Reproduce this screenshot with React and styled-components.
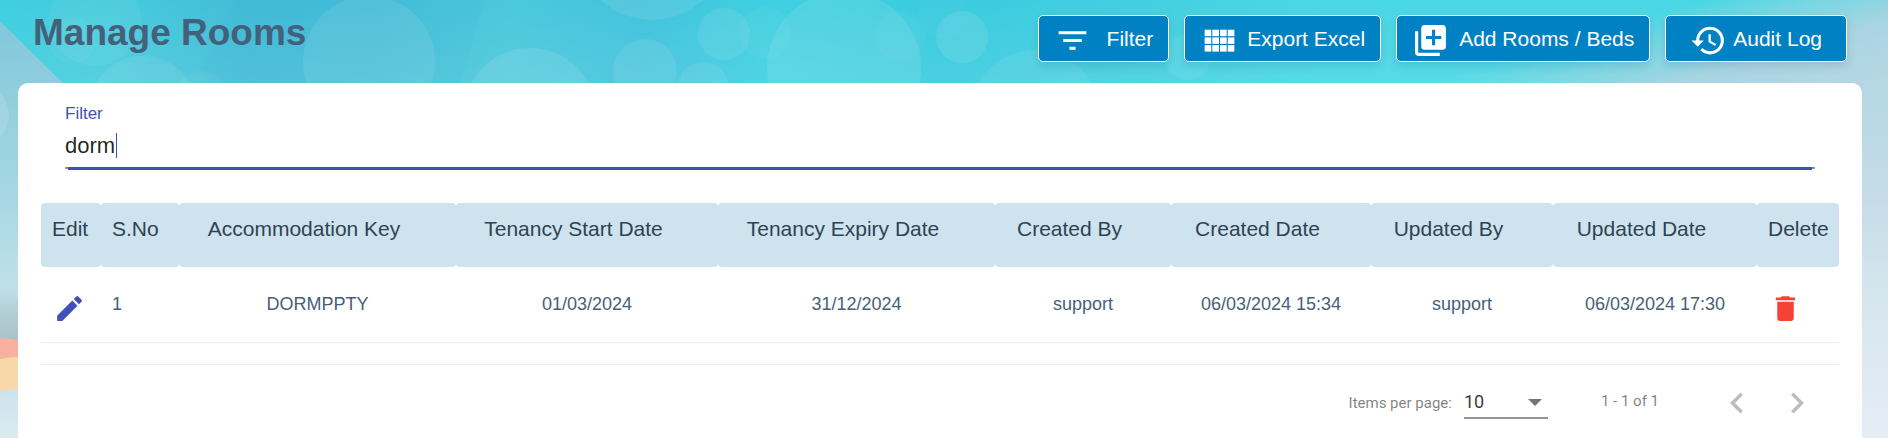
import React, { useState } from "react";
import styled, { createGlobalStyle } from "styled-components";
import {
	MdChevronLeft,
	MdChevronRight,
	MdDelete,
	MdEdit,
	MdFilterList,
	MdHistory,
	MdLibraryAdd
} from "react-icons/md";

const GlobalStyle = createGlobalStyle`
	* {
		box-sizing: border-box;
	}
	body {
		margin: 0;
		font-family: "Liberation Sans", Arial, sans-serif;
		color: #456179;
	}
`;

const Page = styled.div`
	position: relative;
	display: flex;
	flex-flow: column nowrap;
	min-height: 100vh;
	padding: 0 26px 0 18px;
`;

const Backdrop = styled.svg`
	position: absolute;
	inset: 0;
	z-index: -1;
	width: 100%;
	height: 100%;
`;

const Header = styled.header`
	display: flex;
	flex-flow: row wrap;
	justify-content: space-between;
	align-items: flex-start;
	padding: 15px 15px 21px;
`;

const Title = styled.h1`
	margin: 0;
	padding-bottom: 8px;
	font-size: 37px;
	line-height: 36px;
	color: #44607a;
`;

const Toolbar = styled.div`
	display: flex;
	flex-flow: row wrap;
	gap: 15px;
`;

const ToolButton = styled.button`
	display: flex;
	align-items: center;
	justify-content: center;
	gap: ${props => props.$gap || 10}px;
	height: 47px;
	padding: 0 ${props => props.$pad || 15}px;
	border: 1px solid #fff;
	border-radius: 5px;
	background: #0081c4;
	box-shadow: 0 4px 8px rgba(0, 60, 90, 0.14);
	color: #fff;
	font-family: inherit;
	font-size: 21px;
	line-height: 24px;
	white-space: nowrap;
	cursor: pointer;
	svg {
		width: 37px;
		height: 37px;
		margin-top: 4px;
	}
`;

const Panel = styled.main`
	flex: 1;
	padding: 21px 23px 0;
	border-radius: 10px 10px 0 0;
	background: #fff;
`;

const Field = styled.div`
	display: flex;
	flex-flow: column nowrap;
	margin: 0 24px 33px;
	label {
		margin-bottom: 9px;
		font-size: 17px;
		line-height: 20px;
		color: #3f51b5;
	}
`;

const InputLine = styled.div`
	position: relative;
	padding-bottom: 8px;
`;

const FilterInput = styled.input`
	display: block;
	width: 100%;
	height: 26px;
	padding: 0;
	border: 0;
	outline: 0;
	background: transparent;
	color: rgba(0, 0, 0, 0.87);
	caret-color: transparent;
	font-family: inherit;
	font-size: 22px;
	line-height: 26px;
`;

const Caret = styled.span`
	position: absolute;
	top: 0;
	left: 0;
	height: 25px;
	padding-right: 1px;
	border-right: 1px solid #3f51b5;
	color: transparent;
	font-size: 22px;
	line-height: 25px;
	white-space: pre;
	pointer-events: none;
	&::before {
		content: "${props => props.$text}";
	}
`;

const Underline = styled.div`
	height: 3px;
	padding: 0 3px;
	background: linear-gradient(#949494 2px, transparent 2px);
	&::after {
		content: "";
		display: block;
		height: 3px;
		background: #3f51b5;
	}
`;

const RoomTable = styled.table`
	width: 100%;
	table-layout: fixed;
	border-collapse: separate;
	border-spacing: 0;
`;

const HeadCell = styled.th`
	height: 64px;
	padding: 14px ${props => (props.$sortable ? 27 : 0)}px 0 ${props => (props.$sortable ? 0 : 11)}px;
	border-radius: 4px;
	background: #cfe3ee;
	color: #2d4454;
	font-size: 21px;
	font-weight: 400;
	line-height: 24px;
	text-align: ${props => (props.$sortable ? "center" : "left")};
	vertical-align: top;
	white-space: nowrap;
`;

const Cell = styled.td`
	height: 76px;
	padding: ${props => (props.$icon ? "25px 0 0 12px" : "27px 0 0")};
	padding-left: ${props => props.$left && "11px"};
	border-bottom: 1px solid #ececec;
	font-size: 18px;
	line-height: 20px;
	text-align: ${props => (props.$left || props.$icon ? "left" : "center")};
	vertical-align: top;
	white-space: nowrap;
`;

const IconButton = styled.button`
	display: flex;
	align-items: center;
	justify-content: center;
	width: ${props => props.$size}px;
	height: ${props => props.$size}px;
	padding: 0;
	border: 0;
	background: none;
	color: ${props => props.color};
	cursor: pointer;
`;

const Paginator = styled.div`
	display: flex;
	align-items: center;
	justify-content: flex-end;
	margin-top: 21px;
	padding: 8px 12px 0 0;
	border-top: 1px solid #ececec;
	color: rgba(0, 0, 0, 0.5);
	font-family: Roboto, sans-serif;
	font-size: 15px;
	line-height: 20px;
`;

const PageSize = styled.div`
	position: relative;
	margin-left: 12px;
	svg {
		position: absolute;
		top: 12px;
		right: 6px;
		pointer-events: none;
	}
	select {
		display: block;
		width: 84px;
		height: 32px;
		padding: 0 0 2px;
		border: 0;
		border-bottom: 2px solid #949494;
		outline: 0;
		appearance: none;
		background: transparent;
		color: rgba(0, 0, 0, 0.8);
		font-family: inherit;
		font-size: 18px;
	}
`;

const Range = styled.span`
	margin: 0 48px 0 53px;
	padding-bottom: 4px;
`;

const columns = [
	{ name: "Edit", width: 60 },
	{ name: "S.No", width: 78 },
	{ name: "Accommodation Key", width: 277, sortable: true },
	{ name: "Tenancy Start Date", width: 262, sortable: true },
	{ name: "Tenancy Expiry Date", width: 277, sortable: true },
	{ name: "Created By", width: 176, sortable: true },
	{ name: "Created Date", width: 200, sortable: true },
	{ name: "Updated By", width: 182, sortable: true },
	{ name: "Updated Date", width: 204, sortable: true },
	{ name: "Delete", width: 82 }
];

const rooms = [
	{
		key: "DORMPPTY",
		start: "01/03/2024",
		expiry: "31/12/2024",
		createdBy: "support",
		createdDate: "06/03/2024 15:34",
		updatedBy: "support",
		updatedDate: "06/03/2024 17:30"
	}
];

// cx, cy, r, opacity
const bubbles = [
	[95, 20, 46, 0.06],
	[72, 40, 24, 0.05],
	[143, 110, 54, 0.1],
	[200, 96, 25, 0.06],
	[369, 62, 66, 0.1],
	[530, 115, 67, 0.12],
	[652, -55, 75, 0.11],
	[724, 34, 26, 0.1],
	[645, 71, 32, 0.1],
	[703, 88, 26, 0.1],
	[765, 33, 26, 0.05],
	[844, 68, 77, 0.12],
	[900, 36, 25, 0.05],
	[943, 14, 25, 0.03],
	[962, 37, 26, 0.12],
	[1035, 115, 65, 0.08],
	[1188, 57, 23, 0.07]
];

const Background = () => (
	<Backdrop viewBox="0 0 1888 438" preserveAspectRatio="none" aria-hidden="true">
		<defs>
			<linearGradient id="sea">
				<stop offset="0" stopColor="#3dcfe0" />
				<stop offset="0.06" stopColor="#47cbdd" />
				<stop offset="0.13" stopColor="#41bcd7" />
				<stop offset="0.2" stopColor="#43bed8" />
				<stop offset="0.27" stopColor="#4ac8dc" />
				<stop offset="0.34" stopColor="#42c3dd" />
				<stop offset="0.41" stopColor="#3fd0e1" />
				<stop offset="0.5" stopColor="#39cbdf" />
				<stop offset="0.6" stopColor="#43cfe0" />
				<stop offset="0.7" stopColor="#49d7e5" />
				<stop offset="1" stopColor="#49d7e5" />
			</linearGradient>
			<linearGradient id="shore" gradientUnits="userSpaceOnUse" x1="1640" y1="19" x2="1679" y2="147">
				<stop offset="0" stopColor="#8fd6e1" stopOpacity="0" />
				<stop offset="0.25" stopColor="#92d6e1" stopOpacity="0.65" />
				<stop offset="0.55" stopColor="#a9d4e2" />
				<stop offset="1" stopColor="#b7d7e4" />
			</linearGradient>
			<linearGradient id="leftSky" x2="0" y2="1">
				<stop offset="0" stopColor="#80c8da" />
				<stop offset="0.2" stopColor="#8fcddd" />
				<stop offset="0.5" stopColor="#a3d6e2" />
				<stop offset="0.82" stopColor="#bfe0e9" />
				<stop offset="0.91" stopColor="#b1ccd3" />
				<stop offset="1" stopColor="#aac0c8" />
			</linearGradient>
			<linearGradient id="rightSky" x2="0" y2="1">
				<stop offset="0" stopColor="#b5d7e4" />
				<stop offset="0.3" stopColor="#c5dce7" />
				<stop offset="0.6" stopColor="#d6e6ee" />
				<stop offset="1" stopColor="#e5edf5" />
			</linearGradient>
			<linearGradient id="water" x2="0" y2="1">
				<stop offset="0" stopColor="#cce3ec" />
				<stop offset="1" stopColor="#dceaf1" />
			</linearGradient>
			<linearGradient id="lift" x2="0" y2="1">
				<stop offset="0" stopColor="#fff" stopOpacity="0" />
				<stop offset="1" stopColor="#fff" stopOpacity="0.1" />
			</linearGradient>
		</defs>
		<rect width="1888" height="100" fill="url(#sea)" />
		<path d="M235 0h250l-30 100H235l-35-30z" fill="#38b4d4" opacity="0.1" />
		{bubbles.map(([cx, cy, r, opacity]) => (
			<circle key={`${cx}-${cy}`} cx={cx} cy={cy} r={r} fill="#e0eef0" opacity={opacity} />
		))}
		<rect width="1888" height="100" fill="url(#lift)" />
		<rect x="1300" width="588" height="100" fill="url(#shore)" />
		<path d="M0 21L80 100V345H0z" fill="url(#leftSky)" />
		<circle cx="-22" cy="115" r="31" fill="#fff" opacity="0.12" />
		<path d="M0 338q10 0 20 3v30H0z" fill="#f8b0a1" />
		<path d="M0 359q8-2 20-2v36H0z" fill="#f6d8a9" />
		<path d="M0 391q10-2 20-2v49H0z" fill="url(#water)" />
		<path d="M1850 90h38v348h-38z" fill="url(#rightSky)" />
	</Backdrop>
);

const GridIcon = () => (
	<svg viewBox="0 0 24 24" fill="currentColor" aria-hidden="true">
		{[5, 10, 15].map(y =>
			[3, 8, 13, 18].map(x => <rect key={`${x}-${y}`} x={x} y={y} width="4.3" height="4.2" />)
		)}
	</svg>
);

const RoomRow = props => {
	const { room, number } = props;
	return (
		<tr>
			<Cell $icon>
				<IconButton $size={33} color="#3f51b5" aria-label="Edit room">
					<MdEdit size={33} />
				</IconButton>
			</Cell>
			<Cell $left>{number}</Cell>
			<Cell>{room.key}</Cell>
			<Cell>{room.start}</Cell>
			<Cell>{room.expiry}</Cell>
			<Cell>{room.createdBy}</Cell>
			<Cell>{room.createdDate}</Cell>
			<Cell>{room.updatedBy}</Cell>
			<Cell>{room.updatedDate}</Cell>
			<Cell $icon>
				<IconButton $size={33} color="#f44336" aria-label="Delete room">
					<MdDelete size={33} />
				</IconButton>
			</Cell>
		</tr>
	);
};

const App = () => {
	const [filter, setFilter] = useState("dorm");
	const visible = rooms.filter(room => room.key.toLowerCase().includes(filter.toLowerCase()));

	return (
		<Page>
			<GlobalStyle />
			<Background />
			<Header>
				<Title>Manage Rooms</Title>
				<Toolbar>
					<ToolButton $gap={16}>
						<MdFilterList />
						Filter
					</ToolButton>
					<ToolButton>
						<GridIcon />
						Export Excel
					</ToolButton>
					<ToolButton>
						<MdLibraryAdd />
						Add Rooms / Beds
					</ToolButton>
					<ToolButton $gap={6} $pad={24}>
						<MdHistory />
						Audit Log
					</ToolButton>
				</Toolbar>
			</Header>
			<Panel>
				<Field>
					<label htmlFor="filter">Filter</label>
					<InputLine>
						<FilterInput
							id="filter"
							value={filter}
							autoComplete="off"
							onChange={e => setFilter(e.target.value)}
						/>
						<Caret $text={filter} />
					</InputLine>
					<Underline />
				</Field>
				<RoomTable>
					<colgroup>
						{columns.map(col => (
							<col key={col.name} width={col.width} />
						))}
					</colgroup>
					<thead>
						<tr>
							{columns.map(col => (
								<HeadCell key={col.name} $sortable={col.sortable}>
									{col.name}
								</HeadCell>
							))}
						</tr>
					</thead>
					<tbody>
						{visible.map((room, i) => (
							<RoomRow key={room.key} room={room} number={i + 1} />
						))}
					</tbody>
				</RoomTable>
				<Paginator>
					<label htmlFor="pageSize">Items per page:</label>
					<PageSize>
						<select id="pageSize" defaultValue="10">
							<option>5</option>
							<option>10</option>
							<option>20</option>
						</select>
						<svg width="14" height="7" viewBox="0 0 14 7">
							<path d="M0 0h14L7 7z" fill="#757575" />
						</svg>
					</PageSize>
					<Range>1 - 1 of 1</Range>
					<IconButton $size={60} color="#bdbdbd" aria-label="Previous page">
						<MdChevronLeft size={42} />
					</IconButton>
					<IconButton $size={60} color="#bdbdbd" aria-label="Next page">
						<MdChevronRight size={42} />
					</IconButton>
				</Paginator>
			</Panel>
		</Page>
	);
};

export default App;
